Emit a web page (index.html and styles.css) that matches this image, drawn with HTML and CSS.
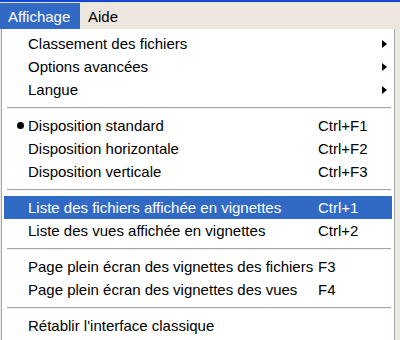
FILE: index.html
```html
<!DOCTYPE html>
<html lang="fr">
<head>
<meta charset="utf-8">
<link rel="stylesheet" href="styles.css">
</head>
<body>
<div class="screen">
  <div class="titleedge"></div>
  <div class="menubar">
    <span class="top active">Affichage</span>
    <span class="top">Aide</span>
  </div>
  <div class="menu">
    <div class="item"><span class="mark"></span><span class="label">Classement des fichiers</span><span class="key"></span><span class="sub"></span></div>
    <div class="item"><span class="mark"></span><span class="label">Options avancées</span><span class="key"></span><span class="sub"></span></div>
    <div class="item"><span class="mark"></span><span class="label">Langue</span><span class="key"></span><span class="sub"></span></div>
    <div class="sep"></div>
    <div class="item"><span class="mark"><span class="dot"></span></span><span class="label">Disposition standard</span><span class="key">Ctrl+F1</span><span class="nosub"></span></div>
    <div class="item"><span class="mark"></span><span class="label">Disposition horizontale</span><span class="key">Ctrl+F2</span><span class="nosub"></span></div>
    <div class="item"><span class="mark"></span><span class="label">Disposition verticale</span><span class="key">Ctrl+F3</span><span class="nosub"></span></div>
    <div class="sep"></div>
    <div class="item hl"><span class="mark"></span><span class="label">Liste des fichiers affichée en vignettes</span><span class="key">Ctrl+1</span><span class="nosub"></span></div>
    <div class="item"><span class="mark"></span><span class="label">Liste des vues affichée en vignettes</span><span class="key">Ctrl+2</span><span class="nosub"></span></div>
    <div class="sep"></div>
    <div class="item"><span class="mark"></span><span class="label">Page plein écran des vignettes des fichiers</span><span class="key">F3</span><span class="nosub"></span></div>
    <div class="item"><span class="mark"></span><span class="label">Page plein écran des vignettes des vues</span><span class="key">F4</span><span class="nosub"></span></div>
    <div class="sep"></div>
    <div class="item"><span class="mark"></span><span class="label">Rétablir l'interface classique</span><span class="key"></span><span class="nosub"></span></div>
  </div>
</div>
</body>
</html>
```
FILE: styles.css
```css
html, body {
  margin: 0;
  padding: 0;
  background: #ffffff;
}
.screen {
  width: 400px;
  height: 340px;
  overflow: hidden;
  font-family: "Liberation Sans", Arial, sans-serif;
  font-size: 15px;
  color: #000;
  background: #ece9e2;
}
.titleedge {
  height: 2px;
  background: #1547d6;
  border-bottom: 1px solid #dfe9c8;
}
.menubar {
  display: flex;
  height: 26px;
  background: #ece6df;
}
.top {
  display: flex;
  align-items: center;
  padding: 0 8px;
}
.top.active {
  background: #316ac5;
  color: #fff;
  width: 64px;
}
.menu {
  margin-left: 1px;
  width: 394px;
  background: #fff;
  border-left: 1px solid #a7a7a7;
  border-right: 1px solid #a7a7a7;
  padding: 3px 2px 0 2px;
  height: 320px;
  box-sizing: border-box;
}
.item {
  display: flex;
  align-items: center;
  height: 23px;
}
.item.hl {
  background: #316ac5;
  color: #fff;
}
.mark {
  width: 24px;
  display: flex;
  align-items: center;
  justify-content: flex-end;
  padding-right: 4px;
  box-sizing: border-box;
}
.dot {
  width: 7px;
  height: 7px;
  border-radius: 50%;
  background: #000;
}
.label {
  flex: 1;
}
.key {
  width: 62px;
}
.nosub {
  width: 12px;
  height: 9px;
}
.sub {
  width: 0;
  height: 0;
  border-top: 4px solid transparent;
  border-bottom: 4px solid transparent;
  border-left: 5px solid #000;
  margin-left: 2px;
  margin-right: 5px;
}
.sep {
  height: 13px;
  display: flex;
  align-items: center;
  padding: 0 1px 0 3px;
}
.sep::before {
  content: "";
  flex: 1;
  height: 1px;
  background: #a8a5a0;
  border-bottom: 1px solid #f2f2f2;
}
```
